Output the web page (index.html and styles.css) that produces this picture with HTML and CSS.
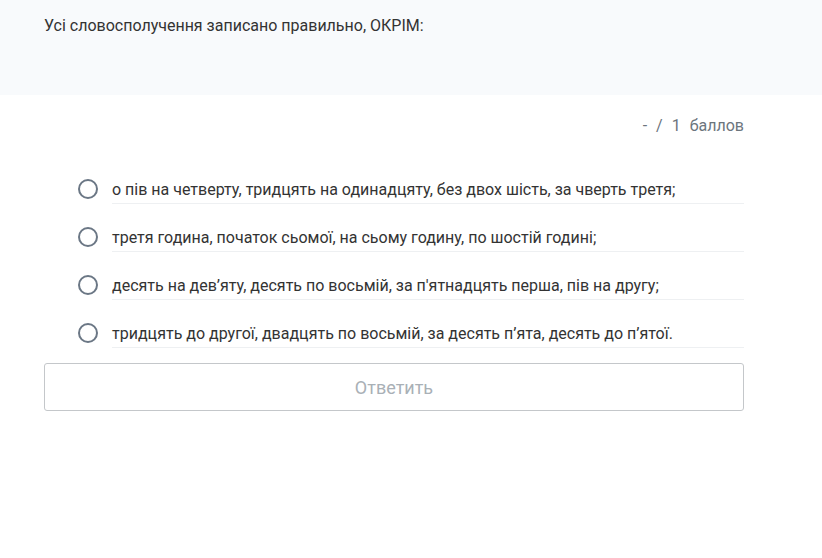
FILE: index.html
```html
<!DOCTYPE html>
<html lang="uk">
	<head>
		<meta charset="UTF-8" />
		<meta name="viewport" content="width=device-width, initial-scale=1.0" />
		<title>Тест</title>
		<link rel="stylesheet" href="styles.css">
	</head>
	<body>
		<div class="question">
			<p>Усі словосполучення записано правильно, ОКРІМ:</p>
		</div>
		<div class="main">
			<div class="score">
				<span>-</span>
				<span>/</span>
				<span>1</span>
				<span>баллов</span>
			</div>
			<form class="options">
				<label class="option">
					<input type="radio" name="answer" value="1" />
					<span class="text">о пів на четверту, тридцять на одинадцяту, без двох шість, за чверть третя;</span>
				</label>
				<label class="option">
					<input type="radio" name="answer" value="2" />
					<span class="text">третя година, початок сьомої, на сьому годину, по шостій годині;</span>
				</label>
				<label class="option">
					<input type="radio" name="answer" value="3" />
					<span class="text">десять на дев’яту, десять по восьмій, за п'ятнадцять перша, пів на другу;</span>
				</label>
				<label class="option">
					<input type="radio" name="answer" value="4" />
					<span class="text">тридцять до другої, двадцять по восьмій, за десять п’ята, десять до п’ятої.</span>
				</label>
				<button type="button" class="submit" disabled>Ответить</button>
			</form>
		</div>
	</body>
</html>
```

FILE: styles.css
```css
body {
	margin: 0;
	font-family: Roboto, "Liberation Sans", sans-serif;
	font-size: 16px;
	color: #333;
	background: #fff;
}

.question {
	background-color: #f8fafc;
	height: 95px;
	padding: 0 44px;
	box-sizing: border-box;
}

.question p {
	margin: 0;
	padding-top: 16px;
	line-height: 20px;
}

.main {
	margin: 0 78px 0 44px;
	width: 700px;
}

.score {
	display: flex;
	justify-content: flex-end;
	gap: 9px;
	color: #6c757d;
	margin-top: 21px;
	line-height: 20px;
}

.options {
	display: flex;
	flex-direction: column;
	margin-top: 40px;
}

.option {
	display: flex;
	align-items: center;
	padding-left: 34px;
	padding-top: 20px;
	cursor: pointer;
}

.option:first-child {
	padding-top: 0;
}

.option input {
	appearance: none;
	margin: 0 14px 0 0;
	width: 20px;
	height: 20px;
	border: 2px solid #6b7785;
	border-radius: 50%;
	box-sizing: border-box;
	flex-shrink: 0;
	position: relative;
	top: -1px;
}

.text {
	flex: 1;
	line-height: 24px;
	padding: 2px 0 1px;
	border-bottom: 1px solid #eef0f2;
}

.submit {
	margin-top: 15px;
	height: 48px;
	border: 1px solid #c4c7ca;
	border-radius: 3px;
	background: #fff;
	font-family: inherit;
	font-size: 18px;
	color: #a9b0b6;
}
```
